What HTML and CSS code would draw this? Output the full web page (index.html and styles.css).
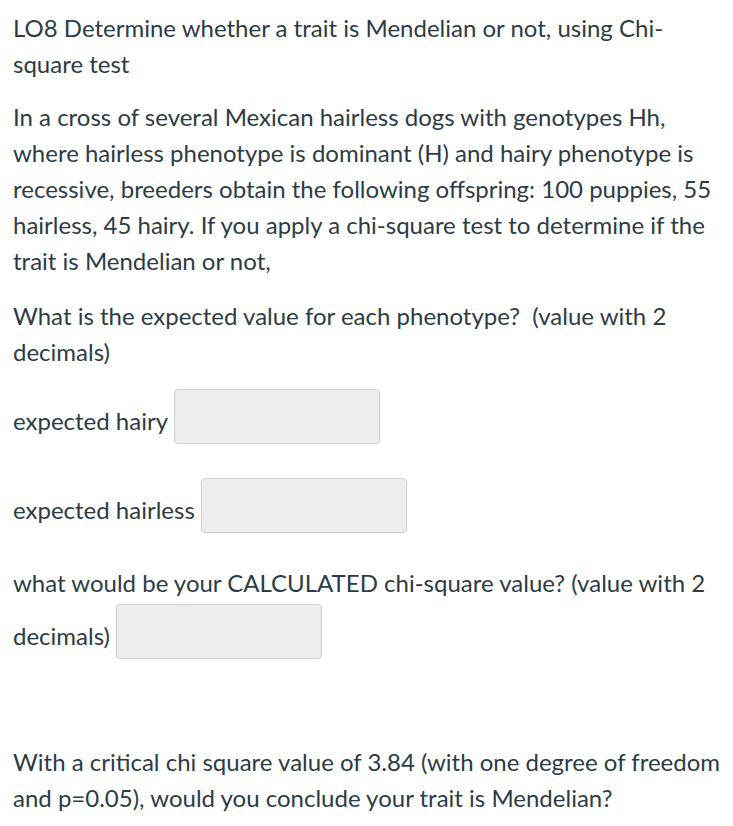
FILE: index.html
```html
<!DOCTYPE html>
<html>
<head>
<meta charset="utf-8">
<link rel="stylesheet" href="styles.css">
</head>
<body>
<div class="question">
  <p class="title">LO8 Determine whether a trait is Mendelian or not, using Chi-square test</p>
  <p class="para">In a cross of several Mexican hairless dogs with genotypes Hh, where hairless phenotype is dominant (H) and hairy phenotype is recessive, breeders obtain the following offspring: 100 puppies, 55 hairless, 45 hairy. If you apply a chi-square test to determine if the trait is Mendelian or not,</p>
  <p class="para">What is the expected value for each phenotype?&nbsp; (value with 2 decimals)</p>
  <p class="row">expected hairy <input class="answer" type="text"></p>
  <p class="row row-second">expected hairless <input class="answer" type="text"></p>
  <p class="para calc">what would be your CALCULATED chi-square value? (value with 2 decimals) <input class="answer answer-calc" type="text"></p>
  <p class="para last">With a critical chi square value of 3.84 (with one degree of freedom and p=0.05), would you conclude your trait is Mendelian?</p>
</div>
</body>
</html>
```
FILE: styles.css
```css
html, body {
  margin: 0;
  padding: 0;
  background: #ffffff;
}
.question {
  padding: 10px 10px 0 13px;
  font-family: Lato, "Liberation Sans", sans-serif;
  font-size: 24px;
  line-height: 36px;
  color: #2d3b45;
}
.question p {
  margin: 0;
}
.title {
  margin-bottom: 17px !important;
}
.para {
  margin-bottom: 19px !important;
}
.row {
  margin-top: 14px !important;
  margin-bottom: 0 !important;
}
.row-second {
  margin-top: 34px !important;
}
.answer {
  display: inline-block;
  vertical-align: 4px;
  box-sizing: border-box;
  width: 206px;
  height: 55px;
  margin: 0;
  padding: 0 8px;
  border: 1px solid #cfcfcf;
  border-radius: 4px;
  background: #ededed;
  font: inherit;
  line-height: normal;
}
.answer-calc {
  margin-top: 3px;
}
.calc {
  margin-top: 32px !important;
}
.last {
  margin-top: 85px !important;
}
```
